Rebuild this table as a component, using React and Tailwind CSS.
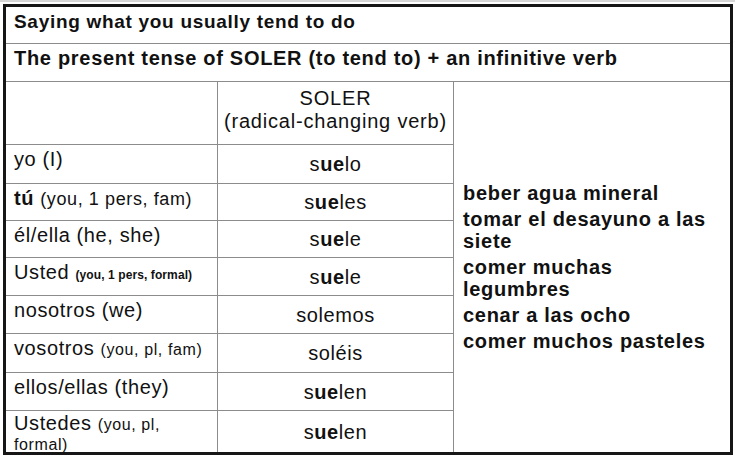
import React from "react";

const rows = [
  { who: <>yo (I)</>, form: ["s", "ue", "lo"] },
  {
    who: (
      <>
        <span className="font-bold">tú</span>{" "}
        <span className="text-[18px]">(you, 1 pers, fam)</span>
      </>
    ),
    form: ["s", "ue", "les"],
  },
  { who: <>él/ella (he, she)</>, form: ["s", "ue", "le"] },
  {
    who: (
      <>
        Usted <span className="text-[12px] font-bold tracking-[0.1px]">(you, 1 pers, formal)</span>
      </>
    ),
    form: ["s", "ue", "le"],
  },
  { who: <>nosotros (we)</>, form: ["solemos"] },
  {
    who: (
      <>
        vosotros <span className="text-[16px]">(you, pl, fam)</span>
      </>
    ),
    form: ["soléis"],
  },
  { who: <>ellos/ellas (they)</>, form: ["s", "ue", "len"] },
  {
    who: (
      <>
        Ustedes <span className="text-[16px]">(you, pl,</span>
        <br />
        <span className="text-[16px]">formal)</span>
      </>
    ),
    form: ["s", "ue", "len"],
  },
];

const uses = [
  ["beber agua mineral"],
  ["tomar el desayuno a las", "siete"],
  ["comer muchas", "legumbres"],
  ["cenar a las ocho"],
  ["comer muchos pasteles"],
];

export default function App() {
  return (
    <div className="w-[735px] h-[460px] bg-white border-t-2 border-[#d6d6d6] pt-[2px] pl-[3px] font-['Liberation_Sans',Arial,sans-serif] text-[20px] text-[#111] tracking-[0.6px]">
      <div className="w-[730px] h-[451px] border-[3px] border-[#161616] grid grid-cols-[212px_236px_1fr] grid-rows-[37px_38px_63px_39px_37px_37px_38px_38px_39px_38px_41px]">
        <div className="col-span-3 border-b border-[#8c8c8c] pl-[8px] pt-[4px] leading-[22px] text-[19px] font-bold tracking-[0.7px]">
          Saying what you usually tend to do
        </div>
        <div className="col-span-3 border-b border-[#8c8c8c] pl-[8px] pt-[3px] leading-[22px] font-bold tracking-[0.7px]">
          The present tense of SOLER (to tend to) + an infinitive verb
        </div>

        <div className="col-start-1 row-start-3 border-b border-r border-[#8c8c8c]"></div>
        <div className="col-start-2 row-start-3 border-b border-r border-[#8c8c8c] pt-[5px] leading-[23px] text-center tracking-[0.8px]">
          SOLER
          <br />
          (radical-changing verb)
        </div>
        <div className="col-start-3 row-start-3 row-span-9 flex flex-col justify-center gap-[4px] pl-[9px] font-bold leading-[22px] tracking-[0.7px]">
          {uses.map((lines, i) => (
            <div key={i}>
              {lines.map((l) => (
                <div key={l}>{l}</div>
              ))}
            </div>
          ))}
        </div>

        {rows.map((r, i) => {
          const last = i === rows.length - 1;
          return (
            <React.Fragment key={i}>
              <div
                className={
                  "col-start-1 border-r border-[#8c8c8c] pl-[8px] pt-[3px] " +
                  (last ? "leading-[18px]" : "border-b leading-[22px]")
                }
              >
                {r.who}
              </div>
              <div
                className={
                  "col-start-2 border-r border-[#8c8c8c] flex items-center justify-center leading-[22px] " +
                  (last ? "" : "border-b")
                }
              >
                <span>
                  {r.form.map((p, j) => (
                    <span key={j} className={p === "ue" ? "font-bold" : ""}>
                      {p}
                    </span>
                  ))}
                </span>
              </div>
            </React.Fragment>
          );
        })}
      </div>
    </div>
  );
}
